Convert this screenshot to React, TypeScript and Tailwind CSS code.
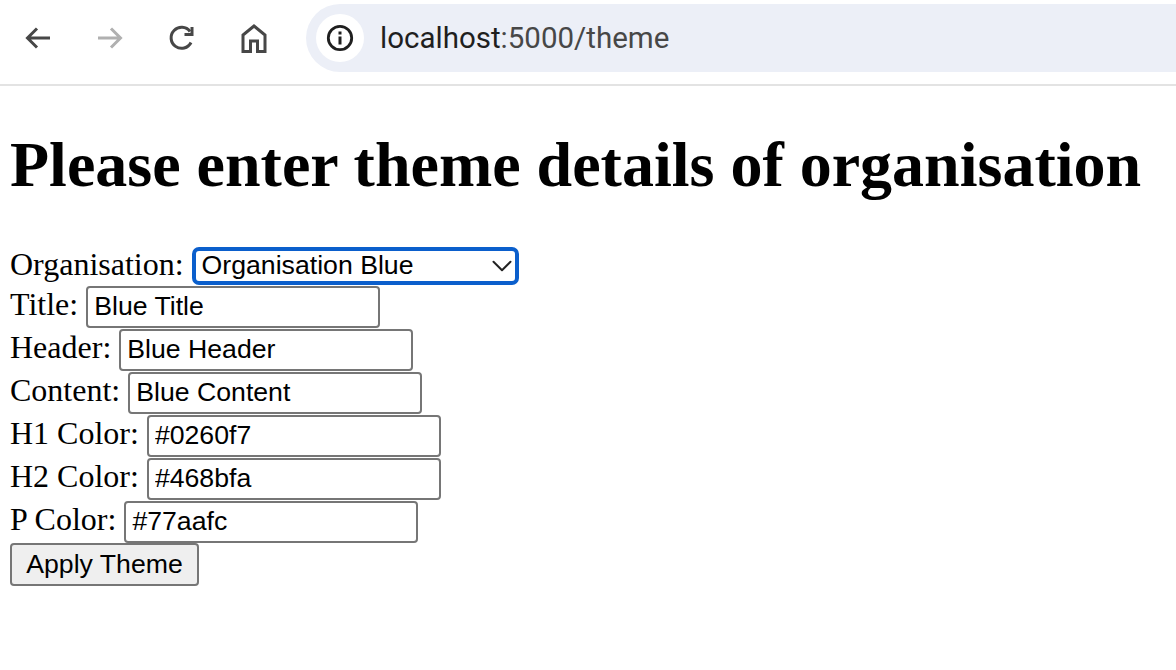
import { ChevronDown } from 'lucide-react'

const FIELDS = [
  { label: 'Title:', value: 'Blue Title' },
  { label: 'Header:', value: 'Blue Header' },
  { label: 'Content:', value: 'Blue Content' },
  { label: 'H1 Color:', value: '#0260f7' },
  { label: 'H2 Color:', value: '#468bfa' },
  { label: 'P Color:', value: '#77aafc' },
]

function ToolbarIcon({ children, muted }: { children: React.ReactNode; muted?: boolean }) {
  return (
    <svg
      viewBox="0 0 32 32"
      fill="none"
      strokeWidth="3"
      className={`h-8 w-8 ${muted ? 'stroke-[#b0b0b0]' : 'stroke-[#474747]'}`}
    >
      {children}
    </svg>
  )
}

function BrowserBar() {
  return (
    <header className="flex h-[86px] items-center border-b-2 border-[#e3e3e3] pl-[22px] pb-[8px]">
      <div className="flex items-center gap-10">
        <ToolbarIcon>
          <path d="M28 16H6M15 6.5 5.5 16l9.5 9.500" />
        </ToolbarIcon>
        <ToolbarIcon muted>
          <path d="M4 16h22M17 6.500l9.500 9.500-9.500 9.500" />
        </ToolbarIcon>
        <ToolbarIcon>
          <path d="M25 20.500A10.500 10.500 0 1 1 24 9.500" />
          <path d="M26 5v7.500h-7.500" />
        </ToolbarIcon>
        <ToolbarIcon>
          <path d="M5 29.500V13L16 4l11 9v16.500h-7.500V19h-7v10.500z" />
        </ToolbarIcon>
      </div>
      <div className="ml-[36px] flex h-[68px] flex-1 items-center rounded-l-[34px] bg-[#eceff7] pl-[10px]">
        <div className="flex h-12 w-12 items-center justify-center rounded-full bg-white">
          <svg viewBox="0 0 28 28" className="h-7 w-7" fill="none">
            <circle cx="14" cy="14" r="11.700" stroke="#1f1f1f" strokeWidth="2.800" />
            <rect x="12.500" y="12.500" width="3" height="8" fill="#1f1f1f" />
            <rect x="12.500" y="7.500" width="3" height="3" fill="#1f1f1f" />
          </svg>
        </div>
        <span className="ml-[16px] font-['Roboto',sans-serif] text-[29.500px] text-[#474747]">
          <span className="text-[#1f1f1f]">localhost</span>:5000/theme
        </span>
      </div>
    </header>
  )
}

function App() {
  return (
    <div className="h-[670px] overflow-hidden bg-white font-['Liberation_Serif',serif] text-[32px] leading-[37px] text-black">
      <BrowserBar />
      <main className="px-[10px]">
        <h1 className="mt-[43px] mb-[47px] text-[64px] leading-[71px] font-bold whitespace-nowrap">
          Please enter theme details of organisation
        </h1>
        <form className="flex flex-col items-start font-['Liberation_Sans',sans-serif]">
          <div className="flex h-[38px] items-center gap-[8px]">
            <label className="pb-[4px] font-['Liberation_Serif',serif]">Organisation:</label>
            <div className="relative flex">
              <select
                defaultValue="blue"
                className="h-[38px] w-[327px] appearance-none rounded-[7px] border-4 border-[#0b5fcc] bg-white pb-[1px] pl-[6px] text-[26.667px] leading-none outline-none"
              >
                <option value="blue">Organisation Blue</option>
              </select>
              <ChevronDown
                size={34}
                strokeWidth={1.400}
                className="pointer-events-none absolute top-[2px] right-0 text-[#222]"
              />
            </div>
          </div>
          {FIELDS.map((field) => (
            <div key={field.label} className="flex h-[43px] items-center gap-[8px]">
              <label className="pb-[4px] font-['Liberation_Serif',serif]">{field.label}</label>
              <input
                type="text"
                defaultValue={field.value}
                className="h-[42px] w-[294px] rounded-[4px] border-2 border-[#767676] bg-white px-[6px] text-[26.667px] outline-none"
              />
            </div>
          ))}
          <button
            type="button"
            className="h-[43px] w-[189px] rounded-[4px] border-2 border-[#767676] bg-[#efefef] pb-[1px] text-[26.667px] leading-none"
          >
            Apply Theme
          </button>
        </form>
      </main>
    </div>
  )
}

export default App
